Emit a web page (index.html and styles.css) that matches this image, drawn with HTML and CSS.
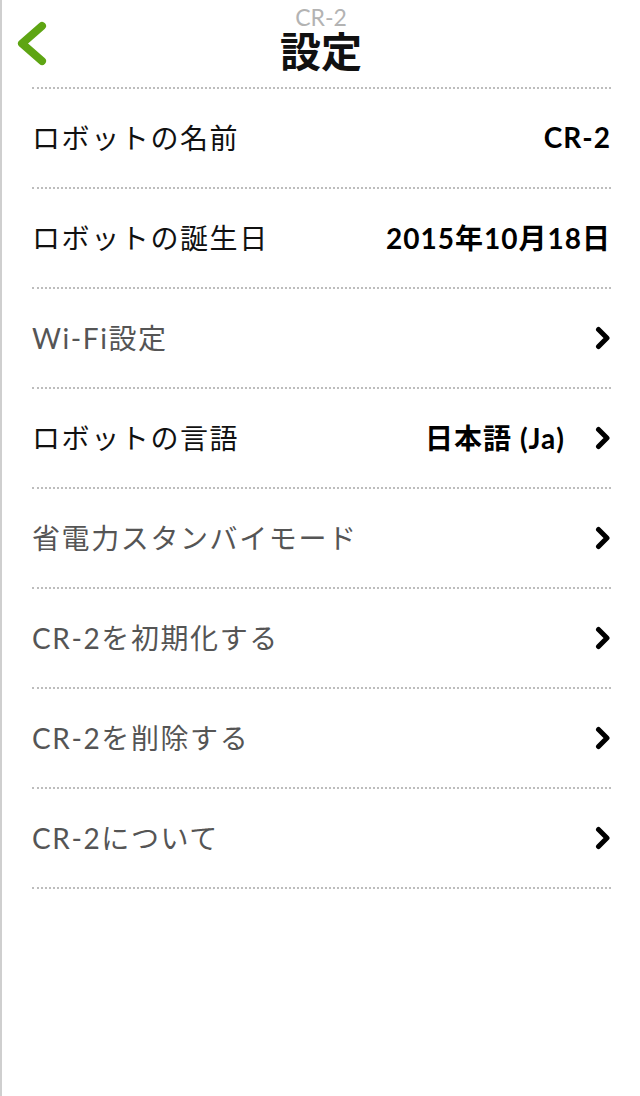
FILE: index.html
```html
<!DOCTYPE html>
<html lang="ja">
<head>
    <meta charset="UTF-8">
    <title>設定</title>
    <link rel="stylesheet" href="styles.css">
</head>
<body>
<div class="screen">
    <div class="header">
        <a class="back" href="#">
            <svg width="50" height="87" viewBox="0 0 50 87">
                <polyline points="40,26 20,43.5 40,61" fill="none" stroke="#5ea513" stroke-width="8" stroke-linecap="round" stroke-linejoin="round"/>
            </svg>
        </a>
        <div class="title">
            <span class="sub">CR-2</span>
            <span class="main">設定</span>
        </div>
        <div></div>
    </div>
    <ul class="list">
        <li class="row">
            <span class="label dark">ロボットの名前</span>
            <span class="value">CR-2</span>
        </li>
        <li class="row">
            <span class="label dark">ロボットの誕生日</span>
            <span class="value">2015年10月18日</span>
        </li>
        <li class="row">
            <span class="label">Wi-Fi設定</span>
            <span class="arrow"><svg width="16" height="24" viewBox="0 0 16 24"><polyline points="3.5,3.5 12,12 3.5,20.5" fill="none" stroke="#000" stroke-width="5" stroke-linecap="round" stroke-linejoin="round"/></svg></span>
        </li>
        <li class="row">
            <span class="label dark">ロボットの言語</span>
            <span class="value">日本語 (Ja)</span>
            <span class="arrow"><svg width="16" height="24" viewBox="0 0 16 24"><polyline points="3.5,3.5 12,12 3.5,20.5" fill="none" stroke="#000" stroke-width="5" stroke-linecap="round" stroke-linejoin="round"/></svg></span>
        </li>
        <li class="row">
            <span class="label">省電力スタンバイモード</span>
            <span class="arrow"><svg width="16" height="24" viewBox="0 0 16 24"><polyline points="3.5,3.5 12,12 3.5,20.5" fill="none" stroke="#000" stroke-width="5" stroke-linecap="round" stroke-linejoin="round"/></svg></span>
        </li>
        <li class="row">
            <span class="label">CR-2を初期化する</span>
            <span class="arrow"><svg width="16" height="24" viewBox="0 0 16 24"><polyline points="3.5,3.5 12,12 3.5,20.5" fill="none" stroke="#000" stroke-width="5" stroke-linecap="round" stroke-linejoin="round"/></svg></span>
        </li>
        <li class="row">
            <span class="label">CR-2を削除する</span>
            <span class="arrow"><svg width="16" height="24" viewBox="0 0 16 24"><polyline points="3.5,3.5 12,12 3.5,20.5" fill="none" stroke="#000" stroke-width="5" stroke-linecap="round" stroke-linejoin="round"/></svg></span>
        </li>
        <li class="row">
            <span class="label">CR-2について</span>
            <span class="arrow"><svg width="16" height="24" viewBox="0 0 16 24"><polyline points="3.5,3.5 12,12 3.5,20.5" fill="none" stroke="#000" stroke-width="5" stroke-linecap="round" stroke-linejoin="round"/></svg></span>
        </li>
    </ul>
</div>
</body>
</html>
```

FILE: styles.css
```css
*{
    margin: 0;
    padding: 0;
    list-style: none;
    box-sizing: border-box;
}

body{
    background-color: #fff;
    font-family: Lato, "Noto Sans CJK JP", sans-serif;
    color: #111;
}

.screen{
    min-height: 1096px;
    border-left: 2px solid #cfcfcf;
}

.header{
    height: 87px;
    display: grid;
    grid-template-columns: 1fr auto 1fr;
}

.back{
    display: block;
    width: 50px;
    height: 87px;
}

.back svg{
    display: block;
}

.title{
    display: flex;
    flex-direction: column;
    align-items: center;
    padding-top: 5px;
}

.title .sub{
    font-size: 23px;
    line-height: 24px;
    color: #b3b3b3;
}

.title .main{
    font-size: 41px;
    line-height: 42px;
    font-weight: bold;
    margin-top: 2px;
    color: #111;
}

.list{
    margin: 0 29px 0 30px;
    border-bottom: 2px dotted #bdbdbd;
}

.row{
    height: 100px;
    border-top: 2px dotted #bdbdbd;
    display: flex;
    align-items: center;
    padding-bottom: 3px;
}

.label{
    flex: 1;
    font-size: 28px;
    letter-spacing: 1.6px;
    color: #555;
}

.label.dark{
    color: #111;
}

.value{
    font-size: 28px;
    font-weight: bold;
    letter-spacing: 1px;
    color: #000;
}

.arrow{
    display: flex;
    margin-left: 30px;
    padding-top: 3px;
}
```
